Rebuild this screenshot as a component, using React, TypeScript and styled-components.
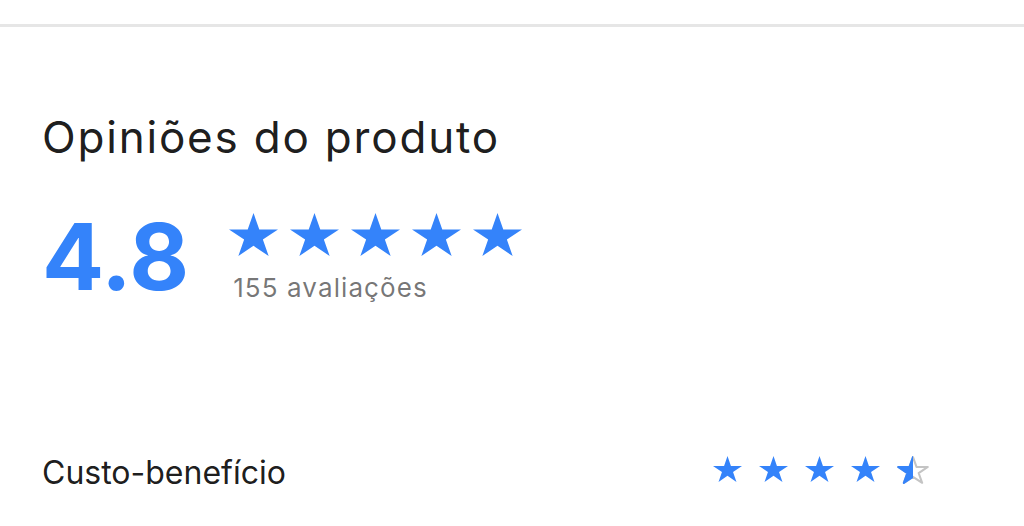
import styled, { createGlobalStyle } from 'styled-components';

const GlobalStyle = createGlobalStyle`
  html, body {
    margin: 0;
    padding: 0;
    background: #ffffff;
  }
  body {
    font-family: Inter, "Liberation Sans", sans-serif;
    -webkit-font-smoothing: antialiased;
  }
`;

const STAR_PATH =
  'M50 0 L61.8 32.85 L100 32.85 L69.1 53.1 L80.9 86 L50 65.7 L19.1 86 L30.9 53.1 L0 32.85 L38.2 32.85 Z';

const BLUE = '#3483fa';

const Page = styled.div`
  width: 1024px;
  height: 526px;
  overflow: hidden;
  padding-top: 24px;
  box-sizing: border-box;
`;

const Divider = styled.div`
  height: 3px;
  background: #e6e6e6;
`;

const Section = styled.section`
  padding: 82px 95px 0 42px;
`;

const Title = styled.h2`
  margin: 0;
  font-size: 44px;
  font-weight: 400;
  line-height: 56px;
  letter-spacing: 1.8px;
  color: rgba(0, 0, 0, 0.9);
`;

const Summary = styled.div`
  display: flex;
  align-items: flex-start;
  gap: 40px;
  margin-top: 44px;
`;

const Score = styled.div`
  font-size: 92px;
  font-weight: 700;
  line-height: 96px;
  color: ${BLUE};
`;

const Side = styled.div`
  display: flex;
  flex-direction: column;
  padding-top: 4px;
`;

const StarRow = styled.div<{ $gap: number }>`
  display: flex;
  gap: ${(p) => p.$gap}px;
`;

const AttrStars = styled(StarRow)`
  padding-bottom: 6px;
`;

const Count = styled.span`
  margin-top: 16px;
  padding-left: 4px;
  font-size: 26px;
  line-height: 32px;
  letter-spacing: 1.1px;
  color: rgba(0, 0, 0, 0.55);
`;

const AttrRow = styled.div`
  display: flex;
  justify-content: space-between;
  align-items: center;
  margin-top: 148px;
`;

const AttrLabel = styled.span`
  font-size: 32px;
  line-height: 40px;
  color: rgba(0, 0, 0, 0.9);
`;

function Star({ w, h, fill = 1, id }: { w: number; h: number; fill?: number; id: string }) {
  if (fill >= 1) {
    return (
      <svg width={w} height={h} viewBox="0 0 100 86" preserveAspectRatio="none">
        <path d={STAR_PATH} fill={BLUE} />
      </svg>
    );
  }
  return (
    <svg width={w} height={h} viewBox="-4 -4 108 94" preserveAspectRatio="none">
      <defs>
        <clipPath id={id}>
          <rect x="-4" y="-4" width={4 + 100 * fill} height="94" />
        </clipPath>
      </defs>
      <path d={STAR_PATH} fill="none" stroke="#c4c4c4" strokeWidth="7" strokeLinejoin="round" />
      <path d={STAR_PATH} fill={BLUE} stroke={BLUE} strokeWidth="7" strokeLinejoin="round" clipPath={`url(#${id})`} />
    </svg>
  );
}

export default function App() {
  const bigStars = [1, 1, 1, 1, 1];
  const smallStars = [1, 1, 1, 1, 0.5];
  return (
    <Page>
      <GlobalStyle />
      <Divider />
      <Section>
        <Title>Opiniões do produto</Title>
        <Summary>
          <Score>4.8</Score>
          <Side>
            <StarRow $gap={12}>
              {bigStars.map((f, i) => (
                <Star key={i} w={49} h={43} fill={f} id={`big-${i}`} />
              ))}
            </StarRow>
            <Count>155 avaliações</Count>
          </Side>
        </Summary>
        <AttrRow>
          <AttrLabel>Custo-benefício</AttrLabel>
          <AttrStars $gap={17}>
            {smallStars.map((f, i) => (
              <Star key={i} w={f < 1 ? 32 : 29} h={f < 1 ? 28 : 26} fill={f} id={`small-${i}`} />
            ))}
          </AttrStars>
        </AttrRow>
      </Section>
    </Page>
  );
}
